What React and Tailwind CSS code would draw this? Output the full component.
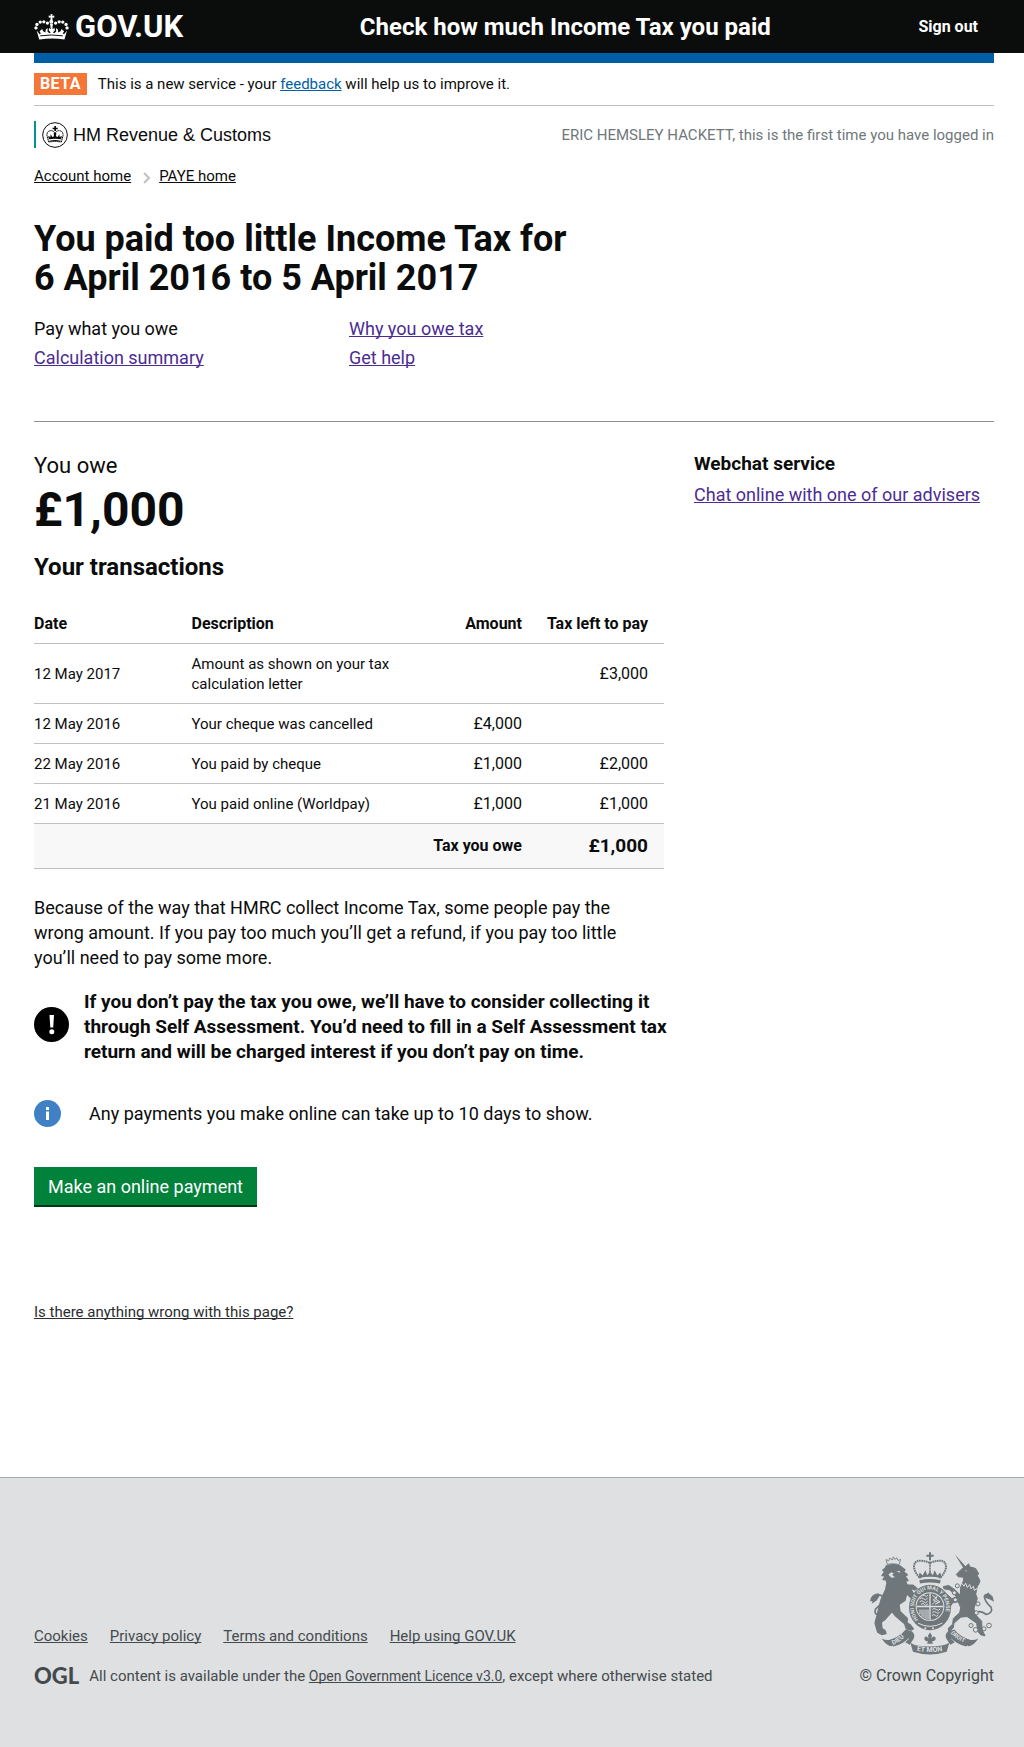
import React from "react";

const link = "underline [text-decoration-skip-ink:none]";

function CrownLogo() {
  const dots = [[47, 80], [50, 69], [60, 62], [71, 61], [82, 65]];
  return (
    <svg aria-hidden="true" viewBox="41 38 107 78" className="h-[26px] w-[35px] shrink-0" fill="white">
      {dots.map(([x, y]) => (
        <g key={x}>
          <circle cx={x} cy={y} r="5" />
          <circle cx={189 - x} cy={y} r="5" />
        </g>
      ))}
      <circle cx="94" cy="61" r="6" />
      <path d="M91 38h7l-1 5 6-1v7l-6-1 1 8h-7l1-8-6 1v-7l6 1z" />
      <path d="M57 115 49 88l9 11 4-2-4-7 8-7 3 7 7 4 1-9 6-5-1 11 6 5 4-2-6-7 1-7 6 3 2-10 3 10 6-3 1 7-6 7 4 2 6-5-1-11 6 5 1 9 7-4 3-7 8 7-4 7 4 2 9-11-8 27q-37-6-75 0z" />
      <path d="M60 104q34-5 69 0" fill="none" stroke="#0b0c0c" strokeWidth="3" />
      <path d="M90 67h9l-2 14h-5z" />
    </svg>
  );
}

function HmrcCrest() {
  return (
    <svg aria-hidden="true" viewBox="0 0 78 78" className="size-[26px] shrink-0" fill="#0b0c0c">
      <circle cx="39" cy="39" r="37" fill="none" stroke="#0b0c0c" strokeWidth="3" />
      <path d="M37 12h5v5h5v5h-5v5h-5v-5h-5v-5h5z" />
      <path d="M20 60 15 41Q14 27 26 26q9 0 13 7 4-7 13-7 12 1 11 15l-5 19q-19-3-38 0z" fill="none" stroke="#0b0c0c" strokeWidth="3" strokeDasharray="5 1" />
      <path d="M21 52l-3-10 7 3 1-8 5 8 5-2-1-11h8l-1 11 5 2 5-8 1 8 7-3-3 10q-18-4-36 0zM22 56q17-4 34 0l-1 3q-16-4-32 0z" />
    </svg>
  );
}

function RoyalArms() {
  const g = "#6f777b";
  const bg = "#dee0e2";
  return (
    <svg role="img" aria-label="Royal coat of arms" viewBox="21 20 375 308" className="h-[103px] w-[125px]" fill={g}>
      <defs>
        <path id="garter" d="M171 225A48 54 0 1 1 237 225" />
        <path id="scroll-left" d="M93 298Q120 287 138 262" />
        <path id="scroll-right" d="M266 263Q285 285 322 298" />
        <path id="scroll-mid" d="M164 316Q203 323 247 316" />
      </defs>

      {/* Lion */}
      <path d="M76 57 72 42l8 4 3-8 8 5 3-9 4 8 7-5 3 8 8-3-5 16q-18-6-35-1z" fill="none" stroke={g} strokeWidth="3" strokeDasharray="5 1" />
      <path stroke={g} strokeWidth="4" strokeLinejoin="round" d="M72 62q18-9 41-1l16 12-5 5 12 10-7 4 9 13-8 1 5 12 18 1 12 10-7 4-13-5 8 15 12 8-3 8-15-2-13-12-5 20-18 12 3 21 22 21-1 13 10 6 9 12-7 4-14-4-5-15-28-24-10-13-20 23-12 9 2 19 9 6 3 9-13 3-12-7-8-27 7-26 4-18 7-26 14-31 4-19-3-10-9-1 7-11-10-1 8-12-6-4 10-8z" />
      <path d="M79 87l9-7 8 4-6 4 9 7-11 2zM104 79l8-3 3 6z" fill={bg} />
      <path d="M62 204Q33 214 41 190 70 167 60 151 48 143 31 166" fill="none" stroke={g} strokeWidth="5" />
      <path d="M50 143q-25 2-26 25l8-2-3 9 15-10 10-16z" />

      {/* Unicorn */}
      <path d="m279 27 34 38-6 8z" />
      <path stroke={g} strokeWidth="3" strokeLinejoin="round" d="m312 62 8-7 3 9 18 5 9 16-4 5 8 16-5 13-45-8 1-16-16-1-6-7 13-14z" />
      <circle cx="312" cy="76" r="2" fill={bg} />
      <path d="m303 105 45 14-5 26-48-20z" />
      <path d="m299 113 7 9 5-9 5 13 7-9 4 13 7-8 3 13 7-6 3 7" fill="none" stroke={bg} strokeWidth="3" />
      <path stroke={g} strokeWidth="3" strokeLinejoin="round" d="m296 125 44 18 6 16-10 29 4 19 19 20 1 25 9 19-13-3-9-11-3-24-29-20-19 2-20 18-2 14-14 13-1-12 13-12 2-17 19-17 3-15-7-18-17 3-10 15-11-5 7-15-14-17-12-8 7-7 14 10 17 15 13-7-20-20-17-3-2-7 16-3 18 12 17 17z" />
      <path d="M340 204q13-12 33 3 21-5 14-22-19-17-20-32 6-14 23 7" fill="none" stroke={g} strokeWidth="5" />
      <path d="m365 155 13-14 14 12 4 16-12-7-7-2z" />
      <g fill={bg} stroke={g} strokeWidth="3">
        <circle cx="286" cy="121" r="6" /><circle cx="277" cy="142" r="6" /><circle cx="280" cy="163" r="6" />
        <circle cx="348" cy="175" r="6" /><circle cx="343" cy="202" r="6" /><circle cx="327" cy="240" r="6" />
        <circle cx="341" cy="253" r="7" /><circle cx="366" cy="250" r="6" /><circle cx="381" cy="240" r="7" />
      </g>

      {/* Central crown */}
      <path d="M201 20h6v8h8v6h-8v10h-6V34h-8v-6h8z" />
      <path d="M204 52Q156 34 156 65q2 18 20 33M204 52q48-18 48 13-2 18-20 33" fill="none" stroke={g} strokeWidth="6" strokeDasharray="5 2" />
      <path d="M204 50v40" stroke={g} strokeWidth="5" strokeDasharray="6 2" />
      <path d="M169 98l4-17 9 9 8-16 6 15 8-11 8 11 6-15 8 16 9-9 4 17q-35-8-70 0z" />
      <path d="M172 104q32-7 64 0l-2 10q-30-6-60 0z" />

      {/* Garter and shield */}
      <ellipse cx="204" cy="186" rx="63" ry="68" />
      <circle cx="204" cy="183" r="43" fill={bg} />
      <circle cx="204" cy="183" r="40" />
      <path d="M204 143v80M164 183h80" stroke={bg} strokeWidth="4" />
      <g stroke={bg} strokeWidth="3" fill="none">
        <path d="M173 160q7-7 12 0t12-2M173 169q7-7 12 0t12-2M177 177q7-7 10 0t11-2M182 151q5-5 8 0t8-2" />
        <path d="m211 150 12 7-10 6 17 9m-4-22-5 11 13 8-15 7M211 176l10-9" />
        <path d="M174 192v14m6-14v22m6-22v25m6-25v28m6-28v29" />
        <path d="M211 192q6-6 12 0t12-2M211 201q6-6 12 0t10-2M210 210q6-6 10 0t9-2" />
      </g>
      <text fontFamily="Roboto, sans-serif" fontWeight="700" fontSize="16" fill={bg}>
        <textPath href="#garter" startOffset="3">HONI SOIT QUI MAL Y PENSE</textPath>
      </text>
      <path d="M168 233q36 19 73 0" fill="none" stroke={bg} strokeWidth="3" />
      <circle cx="190" cy="248" r="3" fill={bg} /><circle cx="213" cy="248" r="3" fill={bg} />

      {/* Motto scroll */}
      <path d="M59 279q16 8 32 2 24-9 40-29l18 5q13 9 5 24l-11 17-13-8 11-10q-9-17-20-9-13 17-32 31-15 0-30-23z" />
      <path d="M349 279q-16 8-32 2-24-9-40-29l-18 5q-13 9-5 24l11 17 13-8-11-10q9-17 20-9 13 17 32 31 15 0 30-23z" />
      <path d="M79 284q28-5 51-28l13 19q-19 21-49 28zM328 284q-28-5-51-28l-13 19q19 21 49 28z" />
      <path d="M145 292q12 8 25 9 34 5 69-1 13-2 23-8l-8 27q-50 16-101 0z" />
      <path d="m204 261 6 9-2 10q6-10 12-5 4 9-7 12h-3l3 8h-18l3-8h-3q-11-3-7-12 6-5 12 5l-2-10z" />
      <g fontFamily="Roboto, sans-serif" fontWeight="700" fontSize="19" fill={bg}>
        <text><textPath href="#scroll-left">DIEU</textPath></text>
        <text fontSize="17"><textPath href="#scroll-right">DROIT</textPath></text>
        <text fontSize="21"><textPath href="#scroll-mid">ET MON</textPath></text>
      </g>
    </svg>
  );
}

const rows = [
  ["12 May 2017", "Amount as shown on your tax calculation letter", "", "£3,000"],
  ["12 May 2016", "Your cheque was cancelled", "£4,000", ""],
  ["22 May 2016", "You paid by cheque", "£1,000", "£2,000"],
  ["21 May 2016", "You paid online (Worldpay)", "£1,000", "£1,000"],
];

function Transactions() {
  return (
    <table className="mt-[22px] w-full table-fixed border-collapse text-[16px] leading-5">
      <colgroup>
        <col className="w-1/4" />
        <col className="w-[37%]" />
        <col className="w-[18%]" />
        <col className="w-1/5" />
      </colgroup>
      <thead>
        <tr className="border-b border-[#bfc1c3]">
          <th scope="col" className="pt-2.5 pb-[9px] text-left">Date</th>
          <th scope="col" className="pt-2.5 pb-[9px] text-left">Description</th>
          <th scope="col" className="pt-2.5 pr-4 pb-[9px] text-right">Amount</th>
          <th scope="col" className="pt-2.5 pr-4 pb-[9px] text-right whitespace-nowrap">Tax left to pay</th>
        </tr>
      </thead>
      <tbody>
        {rows.map(([date, text, amount, left]) => (
          <tr key={date} className="border-b border-[#bfc1c3]">
            <td className="pt-2.5 pb-[9px] text-[15px]">{date}</td>
            <td className="pt-2.5 pr-4 pb-[9px] text-[15px]">{text}</td>
            <td className="pt-2.5 pr-4 pb-[9px] text-right">{amount}</td>
            <td className="pt-2.5 pr-4 pb-[9px] text-right">{left}</td>
          </tr>
        ))}
      </tbody>
      <tfoot>
        <tr className="border-b border-[#bfc1c3] bg-[#f8f8f8] font-bold">
          <th scope="row" colSpan="3" className="py-3 pr-4 text-right">Tax you owe</th>
          <td className="py-3 pr-4 text-right text-[19px]">£1,000</td>
        </tr>
      </tfoot>
    </table>
  );
}

export default function App() {
  return (
    <div className="flex min-h-screen flex-col bg-white font-['Roboto',sans-serif] text-[#0b0c0c]">
      <header className="flex h-[53px] items-center bg-[#0b0c0c] pr-[46px] pl-[34px] font-bold text-white">
        <a href="#home" className="flex flex-1 items-center gap-1.5 text-[31px] leading-[34px]">
          <CrownLogo />
          GOV.UK
        </a>
        <a href="#service" className="text-[24px] leading-[30px]">Check how much Income Tax you paid</a>
        <a href="#sign-out" className="flex-[0.636] text-right text-[16px] leading-5">Sign out</a>
      </header>

      <main className="flex-1 pr-[30px] pl-[34px]">
        <div className="h-2.5 bg-[#005ea5]" />
        <div className="flex items-center border-b border-[#bfc1c3] py-2.5 text-[15px] leading-5">
          <strong className="bg-[#f47738] px-1.5 text-[16px] leading-[22px] tracking-wide text-white">BETA</strong>
          <p className="ml-[11px]">
            This is a new service - your <a href="#feedback" className="text-[#005ea5] underline">feedback</a> will help us to improve it.
          </p>
        </div>

        <div className="mt-[15px] flex h-[27px] items-center justify-between">
          <div className="flex h-full items-center gap-[5px] border-l-2 border-[#009390] pl-1.5 font-['Liberation_Sans',Arial,sans-serif] text-[18px] leading-6">
            <HmrcCrest />
            HM Revenue &amp; Customs
          </div>
          <p className="text-[15px] leading-5 text-[#6f777b]">ERIC HEMSLEY HACKETT, this is the first time you have logged in</p>
        </div>

        <nav aria-label="Breadcrumb" className="mt-[18px] flex items-center text-[15px] leading-5">
          <a href="#account" className={link}>Account home</a>
          <svg aria-hidden="true" viewBox="0 0 8 12" className="mr-2 ml-3 mt-1 h-3 w-2" fill="none" stroke="#bfc1c3" strokeWidth="2">
            <path d="m1 1 5 5-5 5" />
          </svg>
          <a href="#paye" className={link}>PAYE home</a>
        </nav>

        <h1 className="mt-[34px] text-[36px] leading-[39px] font-bold">
          You paid too little Income Tax for
          <br />6 April 2016 to 5 April 2017
        </h1>

        <div className="mt-4 grid grid-cols-[21fr_21fr_22fr] text-[18px] leading-[29px] text-[#4c2c92]">
          <span className="text-[#0b0c0c]">Pay what you owe</span>
          <a href="#why" className={`${link} col-span-2 justify-self-start`}>Why you owe tax</a>
          <a href="#summary" className={`${link} justify-self-start`}>Calculation summary</a>
          <a href="#help" className={`${link} justify-self-start`}>Get help</a>
        </div>

        <hr className="mt-[49px] border-t-1 border-[#8f9294]" />

        <div className="mt-[29px] grid grid-cols-[21fr_10fr] gap-[30px]">
          <section>
            <p className="text-[22px] leading-[30px]">You owe</p>
            <p className="mt-1 text-[48px] leading-[50px] font-bold">£1,000</p>
            <h2 className="mt-[17px] text-[24px] leading-[30px] font-bold">Your transactions</h2>
            <Transactions />

            <p className="mt-[26px] pr-6 text-[18px] leading-[25px]">
              Because of the way that HMRC collect Income Tax, some people pay the wrong amount. If you pay too much you’ll get a refund, if you pay too little you’ll need to pay some more.
            </p>

            <div className="mt-[19px] -mr-3 flex items-start gap-[15px]">
              <svg aria-hidden="true" viewBox="0 0 35 35" className="mt-[18px] size-[35px] shrink-0">
                <circle cx="17.500" cy="17.500" r="17.500" fill="black" />
                <path d="M15.500 8h4.500l-.8 12.500h-2.900z" fill="white" />
                <circle cx="17.800" cy="24.800" r="2.500" fill="white" />
              </svg>
              <strong className="text-[19px] leading-[25px]">
                If you don’t pay the tax you owe, we’ll have to consider collecting it through Self Assessment. You’d need to fill in a Self Assessment tax return and will be charged interest if you don’t pay on time.
              </strong>
            </div>

            <div className="mt-9 flex items-center gap-7">
              <svg aria-hidden="true" viewBox="0 0 27 27" className="size-[27px] shrink-0">
                <circle cx="13.500" cy="13.500" r="13.500" fill="#4080c4" />
                <path d="M12 7h3v3h-3zM12 11.500h3V20h-3z" fill="white" />
              </svg>
              <p className="text-[18px] leading-[25px]">Any payments you make online can take up to 10 days to show.</p>
            </div>

            <button type="button" className="mt-10 block h-10 border-b-2 border-[#003618] bg-[#00823b] px-[14px] text-[18px] leading-[25px] text-white">
              Make an online payment
            </button>

            <p className="mt-[95px] text-[15px] leading-5">
              <a href="#problem" className={`${link} text-[#2b2d2f]`}>Is there anything wrong with this page?</a>
            </p>
          </section>

          <aside>
            <h2 className="text-[19px] leading-[25px] font-bold">Webchat service</h2>
            <a href="#chat" className={`${link} mt-1.5 inline-block text-[18px] leading-[25px] text-[#4c2c92]`}>Chat online with one of our advisers</a>
          </aside>
        </div>
      </main>

      <footer className="mt-[154px] flex items-end justify-between border-t border-[#a1acb2] bg-[#dee0e2] pt-[74px] pr-[30px] pb-[61px] pl-[34px] text-[15px] leading-5 text-[#454a4c]">
        <div>
          <ul className="flex gap-[22px]">
            <li><a href="#cookies" className={link}>Cookies</a></li>
            <li><a href="#privacy" className={link}>Privacy policy</a></li>
            <li><a href="#terms" className={link}>Terms and conditions</a></li>
            <li><a href="#using" className={link}>Help using GOV.UK</a></li>
          </ul>
          <div className="mt-5 flex items-center gap-2.5">
            <strong className="font-['Lato',sans-serif] text-[22px] leading-5 font-black">OGL</strong>
            <p>
              All content is available under the <a href="#licence" className={`${link} text-[14px]`}>Open Government Licence v3.0</a>, except where otherwise stated
            </p>
          </div>
        </div>
        <div className="flex flex-col items-end gap-[11px]">
          <RoyalArms />
          <a href="#crown" className="text-[16px]">© Crown Copyright</a>
        </div>
      </footer>
    </div>
  );
}
